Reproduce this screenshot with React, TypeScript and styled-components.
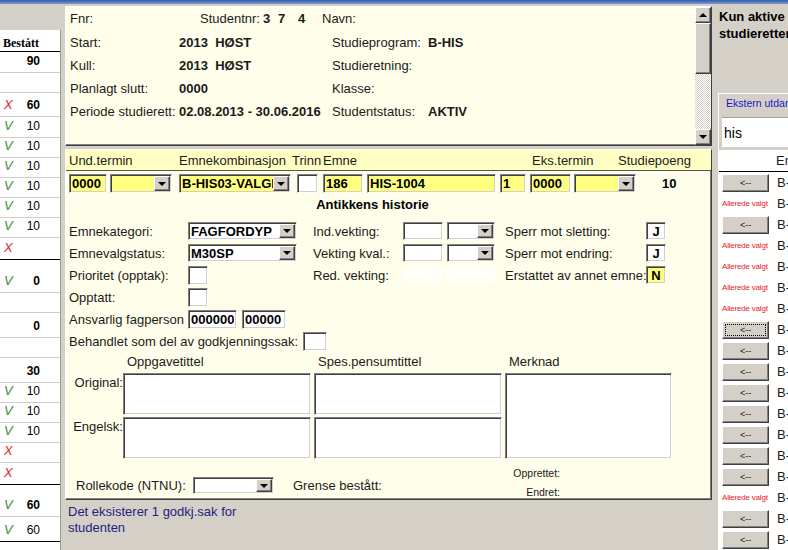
import { createGlobalStyle, styled } from 'styled-components';

const GlobalStyle = createGlobalStyle`
  html, body {
    margin: 0;
    padding: 0;
    background: #d4d0c8;
  }
  body {
    font-family: "Liberation Sans", Arial, sans-serif;
    font-size: 13px;
    color: #1b1b1b;
  }
  * {
    box-sizing: border-box;
  }
`;

const raised = `
  border: 1px solid;
  border-color: #fff #404040 #404040 #fff;
  box-shadow: inset -1px -1px 0 #808080;
`;

const sunken = `
  border: 1px solid;
  border-color: #808080 #fff #fff #808080;
  box-shadow: inset 1px 1px 0 #404040, inset -1px -1px 0 #d4d0c8;
`;

const CREAM = '#fffeea';
const YELLOW = '#ffff80';

const Screen = styled.div`
  width: 788px;
  height: 550px;
  overflow: hidden;
  display: grid;
  grid-template-columns: 64px 648px 76px;
  grid-template-rows: 4px 546px;
`;

const TitleEdge = styled.div`
  grid-column: 1 / -1;
  background: linear-gradient(#2f5fa8, #7a9ad0);
`;

/* ---------- venstre resultatkolonne ---------- */

const Results = styled.div`
  padding: 26px 3px 0 0;
  display: flex;
  flex-direction: column;
  overflow: hidden;
`;

const ResultTable = styled.div`
  flex: 1;
  background: #fff;
  border-right: 1px solid #9c9a94;
`;

const ResultHead = styled.div`
  height: 22px;
  padding: 6px 0 0 3px;
  border-bottom: 1px solid #000;
  font: bold 12px/14px "Liberation Serif", "Times New Roman", serif;
  color: #000;
`;

const ResultRow = styled.div<{ $h: number; $sep?: boolean }>`
  height: ${p => p.$h}px;
  display: flex;
  align-items: flex-end;
  padding: 0 0 4px 4px;
  border-bottom: 1px solid ${p => (p.$sep ? '#000' : '#cdcdcd')};
  font-size: 12px;
  line-height: 14px;
`;

const Mark = styled.span<{ $ok: boolean }>`
  width: 16px;
  font-style: italic;
  font-size: 13px;
  color: ${p => (p.$ok ? '#3d8a3d' : '#e0282c')};
`;

const Score = styled.span<{ $bold?: boolean }>`
  width: 20px;
  text-align: right;
  font-weight: ${p => (p.$bold ? 'bold' : 'normal')};
  color: #000;
`;

/* ---------- midtre arbeidsflate ---------- */

const Work = styled.div`
  display: flex;
  flex-direction: column;
  padding: 2px 0 0 1px;
`;

const InfoPanel = styled.div`
  height: 140px;
  display: flex;
  background: ${CREAM};
  ${raised}
`;

const Info = styled.div`
  flex: 1;
  padding-left: 4px;
`;

const InfoRow = styled.div<{ $h: number }>`
  height: ${p => p.$h}px;
  line-height: ${p => p.$h}px;
  display: flex;
  white-space: pre;
`;

const InfoText = styled.span<{ $w?: number; $bold?: boolean }>`
  width: ${p => (p.$w ? `${p.$w}px` : 'auto')};
  flex: none;
  font-weight: ${p => (p.$bold ? 'bold' : 'normal')};
`;

const VScroll = styled.div`
  width: 16px;
  display: flex;
  flex-direction: column;
`;

const ScrollBtn = styled.div`
  height: 16px;
  background: #d4d0c8;
  display: flex;
  align-items: center;
  justify-content: center;
  ${raised}
`;

const Thumb = styled.div`
  height: 51px;
  background: #d4d0c8;
  ${raised}
`;

const Track = styled.div`
  flex: 1;
  background: repeating-conic-gradient(#d4d0c8 0 25%, #fff 0 50%) 0 0 / 2px 2px;
`;

const Caret = styled.span<{ $up?: boolean }>`
  width: 0;
  height: 0;
  border-left: 4px solid transparent;
  border-right: 4px solid transparent;
  ${p => (p.$up ? 'border-bottom' : 'border-top')}: 4px solid #000;
`;

const CoursePanel = styled.div`
  margin-top: 3px;
  height: 351px;
  background: ${CREAM};
  display: flex;
  flex-direction: column;
  ${raised}
`;

const HeaderBand = styled.div`
  height: 21px;
  flex: none;
  display: flex;
  align-items: center;
  padding-left: 3px;
  background: #ffffc4;
  border-bottom: 1px solid #555;
`;

const ColHead = styled.span<{ $w?: number }>`
  width: ${p => (p.$w ? `${p.$w}px` : 'auto')};
  flex: none;
  white-space: nowrap;
`;

const EntryRow = styled.div`
  margin-top: 3px;
  height: 19px;
  display: flex;
  align-items: center;
  padding-left: 3px;
`;

const Field = styled.input.attrs({ readOnly: true })<{
  $w: number;
  $ml?: number;
  $h?: number;
  $bg?: string;
  $center?: boolean;
}>`
  width: ${p => p.$w}px;
  height: ${p => p.$h ?? 18}px;
  margin: 0 0 0 ${p => p.$ml ?? 0}px;
  padding: 0 2px;
  flex: none;
  font: bold 13px "Liberation Sans", Arial, sans-serif;
  color: #000;
  text-align: ${p => (p.$center ? 'center' : 'left')};
  background: ${p => p.$bg ?? '#fff'};
  outline: none;
  ${sunken}
`;

const SelectBox = styled.div<{ $w: number; $ml?: number; $h?: number; $bg?: string }>`
  width: ${p => p.$w}px;
  height: ${p => p.$h ?? 18}px;
  margin-left: ${p => p.$ml ?? 0}px;
  flex: none;
  display: flex;
  padding: 1px;
  background: ${p => p.$bg ?? '#fff'};
  ${sunken}
`;

const SelectText = styled.span`
  flex: 1;
  overflow: hidden;
  white-space: nowrap;
  padding-left: 1px;
  font-weight: bold;
  color: #000;
  display: flex;
  align-items: center;
`;

const DropBtn = styled.span`
  width: 16px;
  flex: none;
  background: #d4d0c8;
  display: flex;
  align-items: center;
  justify-content: center;
  ${raised}
`;

const Points = styled.span`
  margin-left: 26px;
  font-weight: bold;
  color: #000;
`;

const CourseTitle = styled.div`
  margin: 2px 0 0 3px;
  width: 607px;
  height: 20px;
  line-height: 20px;
  text-align: center;
  font-weight: bold;
  color: #000;
`;

const FormRow = styled.div<{ $first?: boolean }>`
  height: 22px;
  margin-top: ${p => (p.$first ? 5 : 0)}px;
  padding-left: 3px;
  display: grid;
  grid-template-columns: 119px 125px 90px 102px 141px 1fr;
  align-items: center;
  white-space: nowrap;
`;

const Controls = styled.div`
  display: flex;
  gap: 4px;
  height: 18px;
`;

const Ghost = styled.div<{ $w: number }>`
  width: ${p => p.$w}px;
  height: 17px;
  background: #fffff8;
`;

const LineRow = styled.div<{ $labelW: number }>`
  height: 22px;
  padding-left: 3px;
  display: grid;
  grid-template-columns: ${p => p.$labelW}px auto auto 1fr;
  align-items: center;
  white-space: nowrap;
`;

const TextGrid = styled.div`
  padding-left: 3px;
  display: grid;
  grid-template-columns: 51px 188px 188px 167px;
  grid-template-rows: 19px 42px 42px;
  column-gap: 3px;
  row-gap: 2px;
`;

const AreaHead = styled.span`
  align-self: center;
  padding-left: 4px;
  line-height: 15px;
`;

const AreaLabel = styled.span`
  align-self: start;
  padding-top: 2px;
  text-align: right;
  line-height: 15px;
  margin-right: -3px;
  white-space: nowrap;
`;

const Area = styled.textarea.attrs({ readOnly: true })<{ $col: number; $row: string }>`
  grid-column: ${p => p.$col};
  grid-row: ${p => p.$row};
  width: 100%;
  height: 100%;
  resize: none;
  margin: 0;
  outline: none;
  background: #fff;
  ${sunken}
`;

const BottomRow = styled.div`
  height: 39px;
  padding-left: 3px;
  display: grid;
  grid-template-columns: 421px 70px;
`;

const RoleLine = styled.div`
  padding: 18px 0 0 7px;
  display: flex;
  align-items: center;
  height: 35px;
  white-space: nowrap;
`;

const RoleLabel = styled.span<{ $w: number; $ml?: number }>`
  width: ${p => p.$w}px;
  margin-left: ${p => p.$ml ?? 0}px;
  flex: none;
`;

const Meta = styled.div`
  padding-top: 6px;
  text-align: right;
  font-size: 10.5px;
  line-height: 16px;
  white-space: nowrap;
`;

const MetaLine = styled.div<{ $gap?: number }>`
  margin-top: ${p => p.$gap ?? 0}px;
`;

const Notice = styled.div`
  flex: 1;
  padding: 4px 0 0 3px;
  line-height: 16px;
  color: #23237e;
`;

/* ---------- høyre søkepanel ---------- */

const Side = styled.div`
  display: flex;
  flex-direction: column;
  overflow: hidden;
`;

const SideHead = styled.div`
  padding: 4px 0 0 7px;
  font-weight: bold;
  line-height: 17px;
  white-space: nowrap;
  color: #000;
`;

const TabStrip = styled.div`
  margin-top: 51px;
  padding-left: 6px;
  height: 20px;
  display: flex;
`;

const Tab = styled.div`
  flex: 1;
  border-top: 1px solid #fff;
  border-left: 1px solid #fff;
  padding-left: 7px;
  font-size: 10.5px;
  line-height: 19px;
  color: #1a1ac8;
  white-space: nowrap;
`;

const TabBody = styled.div`
  flex: 1;
  margin-left: 6px;
  border-left: 1px solid #fff;
  display: flex;
  flex-direction: column;
`;

const SearchBox = styled.input.attrs({ readOnly: true })`
  margin: 4px 0 0 3px;
  height: 30px;
  width: 70px;
  padding: 0 0 0 2px;
  font: 14px "Liberation Sans", Arial, sans-serif;
  color: #000;
  outline: none;
  background: #fff;
  border: none;
  border-top: 1px solid #a0a0a0;
`;

const PickTable = styled.div`
  margin-top: 3px;
  flex: 1;
  background: #fff;
`;

const PickHead = styled.div`
  height: 22px;
  padding-left: 57px;
  line-height: 21px;
  border-bottom: 1px solid #000;
  white-space: nowrap;
`;

const PickRow = styled.div`
  height: 21px;
  display: flex;
  align-items: center;
  padding-left: 3px;
  white-space: nowrap;
`;

const PickBtn = styled.button<{ $focus?: boolean }>`
  width: 47px;
  height: 18px;
  flex: none;
  padding: 0;
  font: 9px "Liberation Sans", Arial, sans-serif;
  color: #222;
  background: #d4d0c8;
  ${raised}
  outline: ${p => (p.$focus ? '1px dotted #000' : 'none')};
  outline-offset: -4px;
`;

const Taken = styled.span`
  width: 47px;
  flex: none;
  font-size: 8px;
  letter-spacing: -0.2px;
  color: #e8202a;
`;

const Code = styled.span`
  margin-left: 8px;
`;

type ResultLine = { h: number; mark?: 'V' | 'X'; value?: string; bold?: boolean; sep?: boolean };

const resultLines: ResultLine[] = [
  { h: 21, value: '90', bold: true },
  { h: 20 },
  { h: 24, mark: 'X', value: '60', bold: true },
  { h: 21, mark: 'V', value: '10' },
  { h: 20, mark: 'V', value: '10' },
  { h: 20, mark: 'V', value: '10' },
  { h: 20, mark: 'V', value: '10' },
  { h: 20, mark: 'V', value: '10' },
  { h: 20, mark: 'V', value: '10' },
  { h: 22, mark: 'X', sep: true },
  { h: 33, mark: 'V', value: '0', bold: true },
  { h: 20 },
  { h: 25, value: '0', bold: true },
  { h: 20 },
  { h: 25, value: '30', bold: true },
  { h: 20, mark: 'V', value: '10' },
  { h: 20, mark: 'V', value: '10' },
  { h: 20, mark: 'V', value: '10' },
  { h: 20, mark: 'X' },
  { h: 22, mark: 'X', sep: true },
  { h: 32, mark: 'V', value: '60', bold: true },
  { h: 25, mark: 'V', value: '60', sep: true },
];

const picks = [
  { code: 'B-HIS1001' },
  { code: 'B-HIS1002', taken: true },
  { code: 'B-HIS1003' },
  { code: 'B-HIS1004', taken: true },
  { code: 'B-HIS1005', taken: true },
  { code: 'B-HIS1006', taken: true },
  { code: 'B-HIS1007', taken: true },
  { code: 'B-HIS1008', focus: true },
  { code: 'B-HIS1009' },
  { code: 'B-HIS1010' },
  { code: 'B-HIS1011' },
  { code: 'B-HIS1012' },
  { code: 'B-HIS1013' },
  { code: 'B-HIS1014' },
  { code: 'B-HIS1015' },
  { code: 'B-HIS1016', taken: true },
  { code: 'B-HIS1017' },
  { code: 'B-HIS1018' },
];

function Select(props: { value?: string; w: number; ml?: number; h?: number; bg?: string }) {
  return (
    <SelectBox $w={props.w} $ml={props.ml} $h={props.h} $bg={props.bg}>
      <SelectText>{props.value}</SelectText>
      <DropBtn>
        <Caret />
      </DropBtn>
    </SelectBox>
  );
}

export default function App() {
  return (
    <>
      <GlobalStyle />
      <Screen>
        <TitleEdge />

        <Results>
          <ResultTable>
            <ResultHead>Bestått</ResultHead>
            {resultLines.map((r, i) => (
              <ResultRow key={i} $h={r.h} $sep={r.sep}>
                <Mark $ok={r.mark === 'V'}>{r.mark}</Mark>
                <Score $bold={r.bold}>{r.value}</Score>
              </ResultRow>
            ))}
          </ResultTable>
        </Results>

        <Work>
          <InfoPanel>
            <Info>
              <InfoRow $h={24}>
                <InfoText $w={130}>Fnr:</InfoText>
                <InfoText $w={63}>Studentnr:</InfoText>
                <InfoText $w={15} $bold>3</InfoText>
                <InfoText $w={20} $bold>7</InfoText>
                <InfoText $w={24} $bold>4</InfoText>
                <InfoText>Navn:</InfoText>
              </InfoRow>
              <InfoRow $h={23}>
                <InfoText $w={109}>Start:</InfoText>
                <InfoText $w={153} $bold>2013  HØST</InfoText>
                <InfoText $w={96}>Studieprogram:</InfoText>
                <InfoText $bold>B-HIS</InfoText>
              </InfoRow>
              <InfoRow $h={23}>
                <InfoText $w={109}>Kull:</InfoText>
                <InfoText $w={153} $bold>2013  HØST</InfoText>
                <InfoText $w={96}>Studieretning:</InfoText>
              </InfoRow>
              <InfoRow $h={23}>
                <InfoText $w={109}>Planlagt slutt:</InfoText>
                <InfoText $w={153} $bold>0000</InfoText>
                <InfoText $w={96}>Klasse:</InfoText>
              </InfoRow>
              <InfoRow $h={23}>
                <InfoText $w={109}>Periode studierett:</InfoText>
                <InfoText $w={153} $bold>02.08.2013 - 30.06.2016</InfoText>
                <InfoText $w={96}>Studentstatus:</InfoText>
                <InfoText $bold>AKTIV</InfoText>
              </InfoRow>
            </Info>
            <VScroll>
              <ScrollBtn>
                <Caret $up />
              </ScrollBtn>
              <Thumb />
              <Track />
              <ScrollBtn>
                <Caret />
              </ScrollBtn>
            </VScroll>
          </InfoPanel>

          <CoursePanel>
            <HeaderBand>
              <ColHead $w={110}>Und.termin</ColHead>
              <ColHead $w={113}>Emnekombinasjon</ColHead>
              <ColHead $w={31}>Trinn</ColHead>
              <ColHead $w={209}>Emne</ColHead>
              <ColHead $w={86}>Eks.termin</ColHead>
              <ColHead>Studiepoeng</ColHead>
            </HeaderBand>

            <EntryRow>
              <Field $w={38} $h={19} $bg={YELLOW} value="0000" />
              <Select w={62} ml={3} h={19} bg={YELLOW} />
              <Select w={112} ml={7} h={19} bg={YELLOW} value="B-HIS03-VALGI" />
              <Field $w={21} $ml={6} $h={19} value="" />
              <Field $w={40} $ml={5} $h={19} $bg={YELLOW} value="186" />
              <Field $w={129} $ml={4} $h={19} $bg={YELLOW} value="HIS-1004" />
              <Field $w={26} $ml={4} $h={19} $bg={YELLOW} value="1" />
              <Field $w={41} $ml={4} $h={19} $bg={YELLOW} value="0000" />
              <Select w={62} ml={3} h={19} bg={YELLOW} />
              <Points>10</Points>
            </EntryRow>

            <CourseTitle>Antikkens historie</CourseTitle>

            <FormRow $first>
              <span>Emnekategori:</span>
              <Controls>
                <Select w={109} value="FAGFORDYP" />
              </Controls>
              <span>Ind.vekting:</span>
              <Controls>
                <Field $w={40} value="" />
                <Select w={48} />
              </Controls>
              <span>Sperr mot sletting:</span>
              <Controls>
                <Field $w={20} $center value="J" />
              </Controls>
            </FormRow>
            <FormRow>
              <span>Emnevalgstatus:</span>
              <Controls>
                <Select w={109} value="M30SP" />
              </Controls>
              <span>Vekting kval.:</span>
              <Controls>
                <Field $w={40} value="" />
                <Select w={48} />
              </Controls>
              <span>Sperr mot endring:</span>
              <Controls>
                <Field $w={20} $center value="J" />
              </Controls>
            </FormRow>
            <FormRow>
              <span>Prioritet (opptak):</span>
              <Controls>
                <Field $w={20} $h={19} value="" />
              </Controls>
              <span>Red. vekting:</span>
              <Controls>
                <Ghost $w={40} />
                <Ghost $w={48} />
              </Controls>
              <span>Erstattet av annet emne:</span>
              <Controls>
                <Field $w={20} $center $bg={YELLOW} value="N" />
              </Controls>
            </FormRow>
            <FormRow>
              <span>Opptatt:</span>
              <Controls>
                <Field $w={20} $h={19} value="" />
              </Controls>
            </FormRow>
            <LineRow $labelW={119}>
              <span>Ansvarlig fagperson</span>
              <Controls>
                <Field $w={49} $h={19} value="000000" />
                <Field $w={44} $ml={1} $h={19} value="00000" />
              </Controls>
            </LineRow>
            <LineRow $labelW={234}>
              <span>Behandlet som del av godkjenningssak:</span>
              <Controls>
                <Field $w={24} $h={19} value="" />
              </Controls>
            </LineRow>

            <TextGrid>
              <span />
              <AreaHead>Oppgavetittel</AreaHead>
              <AreaHead>Spes.pensumtittel</AreaHead>
              <AreaHead>Merknad</AreaHead>
              <AreaLabel>Original:</AreaLabel>
              <Area $col={2} $row="2" />
              <Area $col={3} $row="2" />
              <Area $col={4} $row="2 / 4" />
              <AreaLabel>Engelsk:</AreaLabel>
              <Area $col={2} $row="3" />
              <Area $col={3} $row="3" />
            </TextGrid>

            <BottomRow>
              <RoleLine>
                <RoleLabel $w={117}>Rollekode (NTNU):</RoleLabel>
                <Select w={81} h={17} />
                <RoleLabel $w={100} $ml={19}>
                  Grense bestått:
                </RoleLabel>
              </RoleLine>
              <Meta>
                <MetaLine>Opprettet:</MetaLine>
                <MetaLine $gap={3}>Endret:</MetaLine>
              </Meta>
            </BottomRow>
          </CoursePanel>

          <Notice>
            Det eksisterer 1 godkj.sak for
            <br />
            studenten
          </Notice>
        </Work>

        <Side>
          <SideHead>
            Kun aktive
            <br />
            studieretter
          </SideHead>
          <TabStrip>
            <Tab>Ekstern utdanning</Tab>
          </TabStrip>
          <TabBody>
            <SearchBox value="his" />
            <PickTable>
              <PickHead>Emne</PickHead>
              {picks.map(p => (
                <PickRow key={p.code}>
                  {p.taken ? <Taken>Allerede valgt</Taken> : <PickBtn $focus={p.focus}>&lt;--</PickBtn>}
                  <Code>{p.code}</Code>
                </PickRow>
              ))}
            </PickTable>
          </TabBody>
        </Side>
      </Screen>
    </>
  );
}
